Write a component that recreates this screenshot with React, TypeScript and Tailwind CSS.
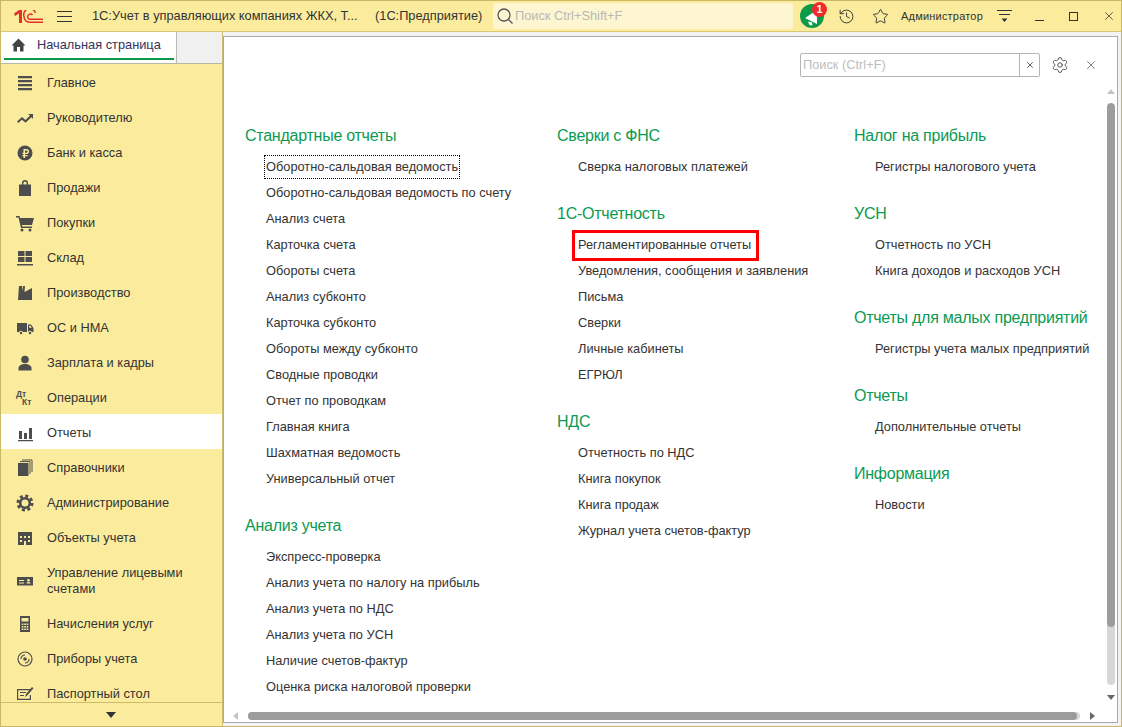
import { History, Settings, Star, X } from "lucide-react";
import type { ReactNode } from "react";

const iconColor = "#4d4d4d";

const Glyph = ({ children, w = 18, h = 18 }: { children: ReactNode; w?: number; h?: number }) => (
  <svg width={w} height={h} viewBox={`0 0 ${w} ${h}`} fill={iconColor}>
    {children}
  </svg>
);

const menu: { label: string; icon: ReactNode; tall?: boolean; active?: boolean }[] = [
  {
    label: "Главное",
    icon: (
      <Glyph>
        <path d="M2 2h14v2.200H2zM2 6h14v2.200H2zM2 10h14v2.200H2zM2 14h14v2.200H2z" />
      </Glyph>
    ),
  },
  {
    label: "Руководителю",
    icon: (
      <Glyph>
        <path d="M1 12.500 6 8l3.500 3L14 6.500 12 5h5v5l-1.600-1.800-5.900 5.600L6 10.800l-3.800 3.200z" />
      </Glyph>
    ),
  },
  {
    label: "Банк и касса",
    icon: (
      <Glyph>
        <circle cx="9" cy="9" r="7.500" />
        <path d="M7.500 5h3a2.500 2.500 0 0 1 0 5H9v1h2.500v1.300H9V14H7.500v-1.700h-1V11h1v-1h-1V8.700h1zM9 6.400v2.300h1.400a1.150 1.150 0 0 0 0-2.300z" fill="#fbec9d" />
      </Glyph>
    ),
  },
  {
    label: "Продажи",
    icon: (
      <Glyph>
        <path d="M3 5.500h3V4a3 3 0 0 1 6 0v1.500h3V17H3zM7.400 5.500h3.200V4a1.600 1.600 0 0 0-3.200 0z" />
      </Glyph>
    ),
  },
  {
    label: "Покупки",
    icon: (
      <Glyph>
        <path d="M0 2h3.500l.6 2H18l-2 7H6l.3 1.500H16V14H5L2.500 3.500H0z" />
        <circle cx="6" cy="16" r="1.500" />
        <circle cx="14" cy="16" r="1.500" />
      </Glyph>
    ),
  },
  {
    label: "Склад",
    icon: (
      <Glyph>
        <path d="M2 2h6.500v5H2zM9.500 2H16v5H9.500zM2 8h6.500v5H2zM9.500 8H16v5H9.500zM1 15h16v1.500H1z" />
      </Glyph>
    ),
  },
  {
    label: "Производство",
    icon: (
      <Glyph>
        <path d="M2 16 3 2h3v5l1-5h2l-.5 6L16 4v12z" />
      </Glyph>
    ),
  },
  {
    label: "ОС и НМА",
    icon: (
      <Glyph>
        <path d="M1 4h10v9H1zM12 5.500h3l2.500 3.500v4H12z" />
        <path d="M13.200 6.700h1.300l1.400 2.100h-2.700z" fill="#fbec9d" />
        <circle cx="5" cy="14" r="1.800" stroke="#fbec9d" />
        <circle cx="14" cy="14" r="1.800" stroke="#fbec9d" />
      </Glyph>
    ),
  },
  {
    label: "Зарплата и кадры",
    icon: (
      <Glyph>
        <circle cx="9" cy="5.500" r="3.800" />
        <path d="M2.500 16.500v-2.500c0-2.500 3.500-4 6.500-4s6.500 1.500 6.500 4v2.500z" />
      </Glyph>
    ),
  },
  {
    label: "Операции",
    icon: (
      <span className="flex h-[18px] w-[18px] flex-col pt-[1px] text-[8.500px] font-bold leading-[8.500px] text-[#4d4d4d]">
        <span>Дт</span>
        <span className="pl-[6px]">Кт</span>
      </span>
    ),
  },
  {
    label: "Отчеты",
    active: true,
    icon: (
      <Glyph>
        <path d="M3 7h3v8H3zM8 9h3v6H8zM13 4h3v11h-3zM2 16h15v1.200H2z" />
      </Glyph>
    ),
  },
  {
    label: "Справочники",
    icon: (
      <Glyph>
        <path d="M2 4h10.500v13H2z" />
        <path d="M4 2.600h10V15M6 1h10v12" fill="none" stroke={iconColor} strokeWidth="1" />
      </Glyph>
    ),
  },
  {
    label: "Администрирование",
    icon: (
      <Glyph>
        <circle cx="9" cy="9" r="4.800" fill="none" stroke={iconColor} strokeWidth="2.600" />
        <circle cx="9" cy="9" r="7" fill="none" stroke={iconColor} strokeWidth="3" strokeDasharray="3 2.500" />
      </Glyph>
    ),
  },
  {
    label: "Объекты учета",
    icon: (
      <Glyph>
        <path d="M2 3h14v13h-6v-4H8v4H2zM4 7v2h2V7zM8 7v2h2V7zM12 7v2h2V7zM4 11v2h2v-2zM12 11v2h2v-2z" fillRule="evenodd" />
      </Glyph>
    ),
  },
  {
    label: "Управление лицевыми счетами",
    tall: true,
    icon: (
      <Glyph>
        <path d="M1 5h16v8.500H1z" />
        <path d="M3 8h5v1H3zM3 10.500h5v1H3z" fill="#fbec9d" />
        <circle cx="12.500" cy="8.200" r="1.300" fill="#fbec9d" />
        <path d="M10.500 11.500c0-1 1-1.500 2-1.500s2 .5 2 1.500z" fill="#fbec9d" />
      </Glyph>
    ),
  },
  {
    label: "Начисления услуг",
    icon: (
      <Glyph>
        <path d="M4 1h10v16H4z" />
        <path d="M5.500 3h7v3.500h-7zM5.700 8.500h1.700v1.500H5.700zM8.200 8.500h1.700v1.500H8.200zM10.600 8.500h1.700v1.500h-1.700zM5.700 11h1.700v1.500H5.700zM8.200 11h1.700v1.500H8.200zM10.600 11h1.700v1.500h-1.700zM5.700 13.500h1.700V15H5.700zM8.200 13.500h1.700V15H8.200zM10.600 13.500h1.700V15h-1.700z" fill="#fbec9d" />
      </Glyph>
    ),
  },
  {
    label: "Приборы учета",
    icon: (
      <Glyph>
        <circle cx="9" cy="9" r="7" fill="none" stroke={iconColor} strokeWidth="1.200" />
        <circle cx="9" cy="9" r="1.800" />
        <path d="M5 9a4 4 0 0 1 4-4M13 9a4 4 0 0 1-4 4" fill="none" stroke={iconColor} strokeWidth="1.200" />
      </Glyph>
    ),
  },
  {
    label: "Паспортный стол",
    icon: (
      <Glyph>
        <path d="M1 4h13v1.200H2.200v8.600h11.600V10H15v5H1z" />
        <path d="M4 7h6v1H4zM4 10h4v1H4zM9 12l1-3 6-7 1.500 1.200-6 7z" />
      </Glyph>
    ),
  },
];

type Group = { title: string; items: string[] };

const columns: { width: string; groups: Group[] }[] = [
  {
    width: "w-[312px]",
    groups: [
      {
        title: "Стандартные отчеты",
        items: [
          "Оборотно-сальдовая ведомость",
          "Оборотно-сальдовая ведомость по счету",
          "Анализ счета",
          "Карточка счета",
          "Обороты счета",
          "Анализ субконто",
          "Карточка субконто",
          "Обороты между субконто",
          "Сводные проводки",
          "Отчет по проводкам",
          "Главная книга",
          "Шахматная ведомость",
          "Универсальный отчет",
        ],
      },
      {
        title: "Анализ учета",
        items: [
          "Экспресс-проверка",
          "Анализ учета по налогу на прибыль",
          "Анализ учета по НДС",
          "Анализ учета по УСН",
          "Наличие счетов-фактур",
          "Оценка риска налоговой проверки",
        ],
      },
    ],
  },
  {
    width: "w-[297px]",
    groups: [
      { title: "Сверки с ФНС", items: ["Сверка налоговых платежей"] },
      {
        title: "1С-Отчетность",
        items: [
          "Регламентированные отчеты",
          "Уведомления, сообщения и заявления",
          "Письма",
          "Сверки",
          "Личные кабинеты",
          "ЕГРЮЛ",
        ],
      },
      {
        title: "НДС",
        items: ["Отчетность по НДС", "Книга покупок", "Книга продаж", "Журнал учета счетов-фактур"],
      },
    ],
  },
  {
    width: "w-[250px]",
    groups: [
      { title: "Налог на прибыль", items: ["Регистры налогового учета"] },
      { title: "УСН", items: ["Отчетность по УСН", "Книга доходов и расходов УСН"] },
      { title: "Отчеты для малых предприятий", items: ["Регистры учета малых предприятий"] },
      { title: "Отчеты", items: ["Дополнительные отчеты"] },
      { title: "Информация", items: ["Новости"] },
    ],
  },
];

const ReportLink = ({ label }: { label: string }) => {
  if (label === "Оборотно-сальдовая ведомость") {
    return (
      <span className="relative">
        <span className="absolute bottom-[-2px] left-[-2px] right-[-2px] top-[-2px] border border-dotted border-black" />
        {label}
      </span>
    );
  }
  if (label === "Регламентированные отчеты") {
    return (
      <span className="relative">
        <span className="absolute bottom-[-6px] left-[-6px] right-[-8px] top-[-5px] border-[3px] border-[#ff0000]" />
        {label}
      </span>
    );
  }
  return <span>{label}</span>;
};

export default function App() {
  return (
    <div className="flex h-[727px] w-[1122px] flex-col overflow-hidden border border-[#c8b764] bg-[#f3f3f3] font-['Liberation_Sans',Arial,sans-serif] text-[12.800px] text-[#333333]">
      <header className="flex h-[31px] shrink-0 items-center border-b border-[#d8c777] bg-[#fbec9d]">
        <svg className="ml-[13px]" width="29" height="13" viewBox="0 0 29 13" fill="none" stroke="#e2302b" strokeWidth="1.500">
          <path d="M0 3.500 5 0h3v13H5V3.500L1 6z" fill="#e2302b" stroke="none" />
          <path d="M21.500 2.800A5.600 5.600 0 0 0 10 6.500 5.600 5.600 0 0 0 15.500 12.200H29" />
          <path d="M18.500 5A2.700 2.700 0 1 0 15.500 9.200H29" />
        </svg>
        <svg className="ml-[14px]" width="15" height="13" viewBox="0 0 15 13" stroke="#333333" strokeWidth="1.200">
          <path d="M0 1.500h15M0 6.500h15M0 11.500h15" />
        </svg>
        <span className="ml-[20px] w-[283px] whitespace-nowrap">1С:Учет в управляющих компаниях ЖКХ, Т...</span>
        <span className="w-[118px] whitespace-nowrap">(1С:Предприятие)</span>
        <div className="flex h-[26px] w-[300px] items-center rounded-[2px] bg-[#fdf6d0] pl-[3px] text-[#b8b8b8]">
          <svg width="18" height="18" viewBox="0 0 18 18" fill="none" stroke="#555555" strokeWidth="1.300">
            <circle cx="8" cy="8" r="6" />
            <path d="m12.500 12.500 4 4" />
          </svg>
          <span className="ml-[1px]">Поиск Ctrl+Shift+F</span>
        </div>
        <div className="relative ml-[7px] h-[24px] w-[24px] rounded-full bg-[#0b9a4a]">
          <svg className="absolute left-[3px] top-[3px]" width="18" height="20" viewBox="0 0 18 20" fill="#ffffff">
            <path d="M2 11 14 3v14zM5 14.500l4 1 .5 3-3-.5z" />
          </svg>
          <span className="absolute right-[-3px] top-[-2px] flex h-[15px] w-[15px] items-center justify-center rounded-full bg-[#ee2b2b] text-[10px] font-bold text-white">1</span>
        </div>
        <History className="ml-[14px]" size={17} color="#333333" strokeWidth={1.300} />
        <Star className="ml-[17px]" size={17} color="#333333" strokeWidth={1.300} />
        <span className="ml-[12px] w-[82px] whitespace-nowrap text-[11px] tracking-[0.2px]">Администратор</span>
        <svg className="ml-[14px]" width="15" height="14" viewBox="0 0 15 14" stroke="#333333" strokeWidth="1.100">
          <path d="M0 1.500h15M2 5.500h11" />
          <path d="M4.500 9.500h6L7.500 13z" fill="#333333" stroke="none" />
        </svg>
        <span className="ml-[23px] mt-[8px] h-[1px] w-[9px] bg-[#333333]" />
        <span className="ml-[25px] h-[9px] w-[9px] border border-[#333333]" />
        <X className="ml-[24px]" size={14} color="#333333" strokeWidth={1.300} />
      </header>

      <div className="flex min-h-0 flex-1">
        <aside className="flex w-[222px] shrink-0 flex-col border-r border-[#cdbd6e] bg-[#fbec9d]">
          <div className="flex h-[32px] shrink-0 border-b border-[#b8b8a0] bg-[#f0f0f0]">
            <div className="flex w-[176px] flex-col border-r border-[#b8b8b8] bg-white pl-[3px] pr-[2px]">
              <div className="flex flex-1 items-center text-[#33335c]">
                <svg className="ml-[7px]" width="15" height="14" viewBox="0 0 15 14" fill="#444444">
                  <path d="M6 13.500V9h3v4.500h3.500V7.500h2L7.500.5l-7 7h2v6z" />
                </svg>
                <span className="ml-[11px]">Начальная страница</span>
              </div>
              <div className="mb-[3px] h-[2px] bg-[#0b9a4a]" />
            </div>
          </div>
          <nav className="min-h-0 flex-1 overflow-hidden">
            {menu.map((m) => (
              <div
                key={m.label}
                className={`flex items-center pt-[2px] ${m.tall ? "h-[51px]" : "h-[35px]"} ${m.active ? "bg-white" : ""}`}
              >
                <span className="flex w-[46px] shrink-0 justify-center pl-[2px]">{m.icon}</span>
                <span className="w-[165px] leading-[16px]">{m.label}</span>
              </div>
            ))}
          </nav>
          <div className="flex h-[24px] shrink-0 items-center justify-center border-t border-[#cdbd6e] pr-[2px]">
            <svg width="10" height="6" viewBox="0 0 10 6" fill="#333333">
              <path d="M0 0h10L5 6z" />
            </svg>
          </div>
        </aside>

        <main className="relative mb-[3px] mr-[3px] mt-[4px] flex min-w-0 flex-1 flex-col border border-[#a9a9a9] bg-white">
          <div className="mr-[19px] mt-[16px] flex h-[24px] shrink-0 items-center justify-end">
            <div className="flex h-[24px] w-[240px] items-center rounded-[2px] border border-[#b5b5b5] text-[#bdbdbd]">
              <span className="flex-1 pl-[2px]">Поиск (Ctrl+F)</span>
              <span className="flex h-full w-[20px] items-center justify-center border-l border-[#b5b5b5]">
                <X size={10} color="#444444" strokeWidth={2} />
              </span>
            </div>
            <Settings className="ml-[11px]" size={18} color="#444444" strokeWidth={1.200} />
            <X className="ml-[15px]" size={14} color="#555555" strokeWidth={1.300} />
          </div>
          <div className="ml-[21px] mt-[46px] flex">
            {columns.map((col) => (
              <div key={col.width} className={`${col.width} flex shrink-0 flex-col gap-[21px]`}>
                {col.groups.map((g) => (
                  <section key={g.title}>
                    <h2 className="mb-[5px] flex h-[26px] items-center whitespace-nowrap text-[16px] font-normal tracking-[-0.25px] text-[#0b9a52]">{g.title}</h2>
                    {g.items.map((item) => (
                      <div key={item} className="flex h-[26px] items-center whitespace-nowrap pl-[21px]">
                        <ReportLink label={item} />
                      </div>
                    ))}
                  </section>
                ))}
              </div>
            ))}
          </div>

          <div className="absolute right-[2px] top-[52px] flex h-[611px] w-[9px] flex-col items-center">
            <svg className="shrink-0" width="8" height="5" viewBox="0 0 8 5" fill="#c4c4c4">
              <path d="M4 0l4 5H0z" />
            </svg>
            <div className="mt-[9px] h-[582px] w-[8px] shrink-0 overflow-hidden rounded-[4px] bg-[#d6d8d7]">
              <div className="h-[524px] rounded-[4px] bg-[#9c9c9c]" />
            </div>
            <svg className="mt-[10px] shrink-0" width="8" height="5" viewBox="0 0 8 5" fill="#666666">
              <path d="M0 0h8L4 5z" />
            </svg>
          </div>
          <div className="absolute bottom-[2px] left-[9px] flex h-[8px] items-center">
            <svg className="shrink-0" width="5" height="8" viewBox="0 0 5 8" fill="#c4c4c4">
              <path d="M0 4l5-4v8z" />
            </svg>
            <div className="ml-[10px] h-[8px] w-[832px] rounded-[4px] bg-[#d6d8d7]">
              <div className="h-[8px] w-[829px] rounded-[4px] bg-[#9c9c9c]" />
            </div>
            <svg className="ml-[10px] shrink-0" width="5" height="8" viewBox="0 0 5 8" fill="#666666">
              <path d="M5 4L0 0v8z" />
            </svg>
          </div>
        </main>
      </div>
    </div>
  );
}
